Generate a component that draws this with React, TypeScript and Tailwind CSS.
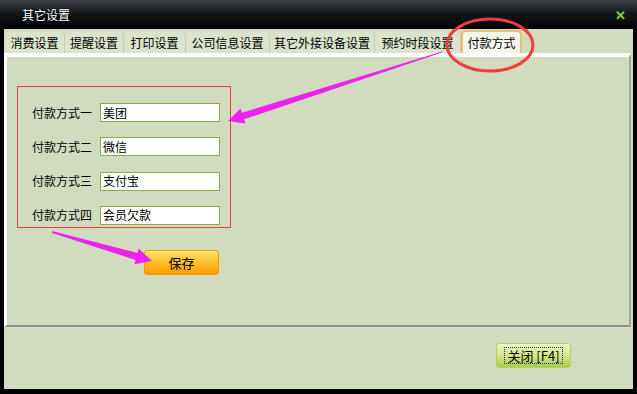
import React from "react";

const tabs = [
  { label: "消费设置", w: "w-[60px]" },
  { label: "提醒设置", w: "w-[59px]" },
  { label: "打印设置", w: "w-[62px]" },
  { label: "公司信息设置", w: "w-[84px]" },
  { label: "其它外接设备设置", w: "w-[105px]" },
  { label: "预约时段设置", w: "w-[86px]" },
];

const rows = [
  { label: "付款方式一", value: "美团" },
  { label: "付款方式二", value: "微信" },
  { label: "付款方式三", value: "支付宝" },
  { label: "付款方式四", value: "会员欠款" },
];

export default function App() {
  return (
    <div
      className="relative w-[637px] h-[394px] bg-black flex flex-col overflow-hidden text-[12px] text-black"
      style={{ fontFamily: '"Noto Sans CJK SC", "Noto Sans", sans-serif' }}
    >
      {/* Title bar */}
      <div className="h-[29px] shrink-0 flex items-center justify-between pl-[22px] pr-[11px] bg-[linear-gradient(to_bottom,#3b4045_0%,#15181b_45%,#000000_100%)]">
        <span className="text-white text-[12px] leading-none [text-shadow:0_0_2px_#000]">其它设置</span>
        <span className="text-[#8fd42a] text-[13px] font-bold leading-none">✕</span>
      </div>

      {/* Body */}
      <div className="flex-1 mx-[4px] mb-[5px] bg-[#d0dcbd] flex flex-col">
        {/* Tabs */}
        <div className="h-[24px] shrink-0 flex items-end pl-[1px]">
          {tabs.map((t) => (
            <div
              key={t.label}
              className={`${t.w} h-[21px] flex items-center justify-center bg-[#dbe4ca] border-r border-[#c4ceb0] rounded-t-[4px] leading-none`}
            >
              {t.label}
            </div>
          ))}
          <div className="w-[61px] h-[24px] -mb-[1px] flex items-center justify-center bg-[#f4f6ec] border-[2px] border-b-0 border-[#f0bd6a] rounded-t-[5px] leading-none">
            付款方式
          </div>
        </div>

        {/* Panel */}
        <div className="h-[274px] shrink-0 mr-[2px] border-l-[3px] border-t-[4px] border-white border-r-[2px] border-b-[2px] border-r-[#a3a3a3] border-b-[#8e8e8e] bg-[#d0dcbd] flex flex-col pl-[10px] pt-[29px]">
          <div className="w-[214px] h-[142px] border border-[#ee3b3b] flex flex-col pl-[14px] pt-[16px] gap-[15.3px]">
            {rows.map((r) => (
              <div key={r.label} className="flex items-center h-[19px]">
                <span className="w-[68px] leading-none">{r.label}</span>
                <div className="w-[120px] h-[19px] bg-white border border-[#8dab45] flex items-center pl-[2px] leading-none">
                  {r.value}
                </div>
              </div>
            ))}
          </div>
          <div className="mt-[22px] ml-[127px] w-[75px] h-[25px] rounded-[3px] border border-[#e89a10] bg-[linear-gradient(to_bottom,#ffe66a_0%,#ffc233_45%,#ff9c00_100%)] flex items-center justify-center text-[13px] leading-none">
            保存
          </div>
        </div>
        <div className="h-[2px] shrink-0 bg-[#dadcd4]" />

        {/* Bottom area */}
        <div className="flex-1 flex justify-end items-start pt-[14px] pr-[62px]">
          <div className="w-[75px] h-[25px] rounded-[3px] border border-[#b7cf6a] bg-[linear-gradient(to_bottom,#eef6c4_0%,#d3e78a_50%,#aacd45_100%)] flex items-center justify-center">
            <span
              className="border border-dotted border-[#1a1a9a] px-[2px] h-[17px] flex items-center text-[13px] leading-none"
              style={{ fontFamily: '"Noto Sans CJK SC", "Liberation Serif", serif' }}
            >
              关闭 [F4]
            </span>
          </div>
        </div>
      </div>

      {/* Annotations */}
      <svg className="absolute left-0 top-0 pointer-events-none" width="637" height="394" viewBox="0 0 637 394">
        <ellipse cx="490" cy="45" rx="43" ry="26" fill="none" stroke="#f03c3c" strokeWidth="3" />
        <polygon
          fill="#ee22ee"
          points="442,51.5 242,112.7 240.5,108.4 228,121 245.5,123.6 244,119.3 442,52.5"
        />
        <polygon
          fill="#ee22ee"
          points="52,231 137.6,253.1 138.8,248.8 152,261 134.4,264.2 135.6,259.9 52,233"
        />
      </svg>
    </div>
  );
}
